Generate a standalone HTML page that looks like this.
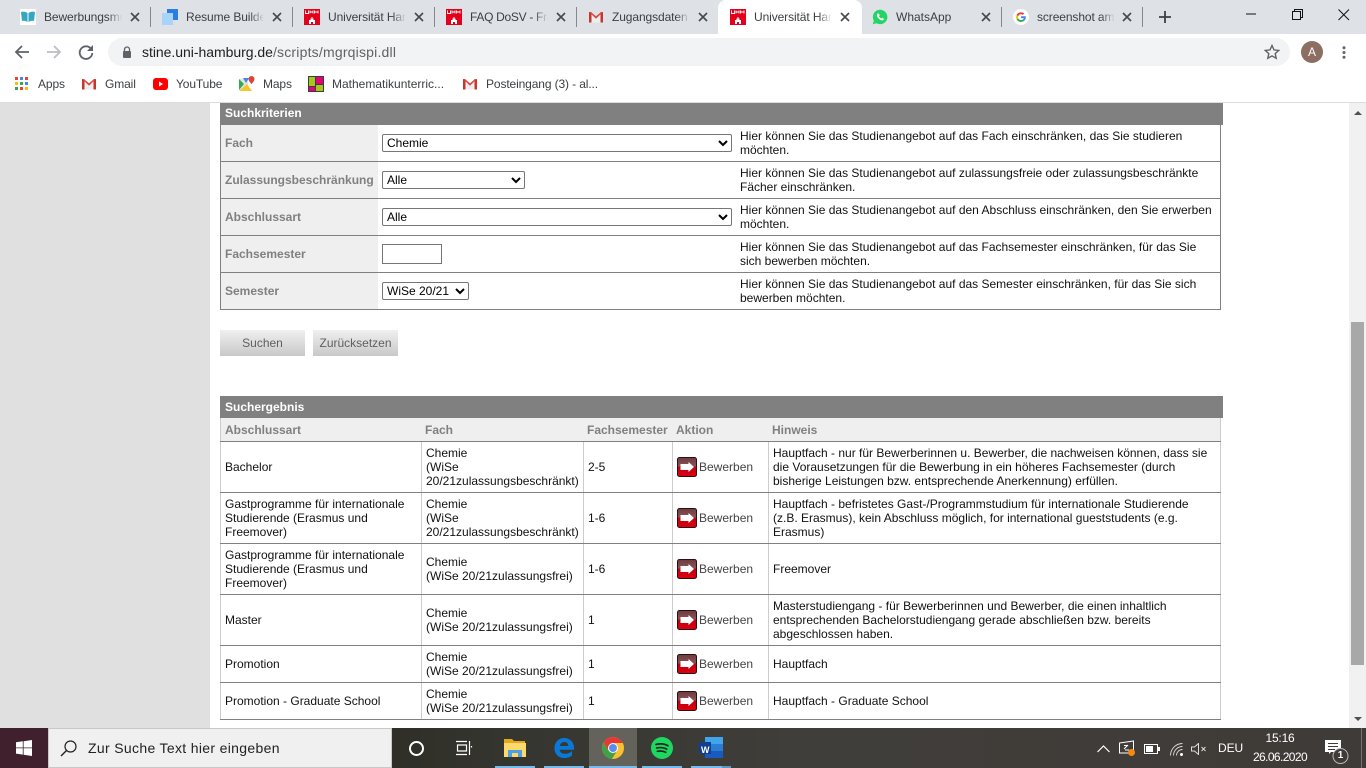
<!DOCTYPE html>
<html lang="de"><head><meta charset="utf-8"><title>Universität Hamburg</title>
<style>
*{box-sizing:border-box}
html,body{margin:0;padding:0;width:1366px;height:768px;overflow:hidden;background:#fff;font-family:"Liberation Sans",sans-serif;font-size:12px;color:#000}
.a{position:absolute}
svg{display:block}
#top{left:0;top:0;width:1366px;height:34px;background:#dee1e6}
.tab{position:absolute;top:0;height:34px;width:142px}
.tab svg.f{position:absolute;left:0;top:9px}
.tab .t{position:absolute;left:24px;top:9px;width:78px;height:16px;overflow:hidden;white-space:nowrap;font-size:12px;line-height:16px;letter-spacing:-.1px;color:#3c4043;-webkit-mask-image:linear-gradient(90deg,#000 82%,transparent);mask-image:linear-gradient(90deg,#000 82%,transparent)}
.tab svg.x{position:absolute;left:110px;top:12px}
.sep{position:absolute;top:7px;width:1px;height:20px;background:#85888c}
#bm .b{position:absolute;top:77px;line-height:14px;font-size:12px;letter-spacing:-.12px;color:#3c4043;white-space:nowrap}
.l{position:absolute;background:#808080}
.v{position:absolute;background:#ccc}
.c{position:absolute;display:flex;align-items:center;line-height:14px;white-space:nowrap;color:#111}
.lab{position:absolute;left:221px;width:157px;height:36px;background:#efefef;color:#808080;font-weight:bold;line-height:36px;padding-left:4px}
.d{position:absolute;left:740px;line-height:14px;white-space:nowrap;color:#111}
select{position:absolute;left:382px;height:18px;font:12px "Liberation Sans",sans-serif;background:#fff;color:#000;border:1px solid #767676;border-radius:2px;padding:0;margin:0}
.hd{position:absolute;left:220px;width:1003px;height:22px;background:#808080;color:#fff;font-weight:bold;line-height:20px;padding-left:5px}
.sh{position:absolute;top:423px;line-height:14px;font-weight:bold;color:#808080}
.btn{position:absolute;top:330px;width:85px;height:26px;background:linear-gradient(#f0f0f0,#c8c8c8);color:#5f5f5f;text-align:center;line-height:27px}
.ar{position:absolute;left:677px;width:20px;height:20px}
.bw{position:absolute;left:699px;line-height:14px;color:#444}
.ul{position:absolute;top:766px;height:2px;background:#76b9ed}
</style></head><body>
<svg width="0" height="0" style="position:absolute">
<symbol id="uhh" viewBox="0 0 16 16"><rect width="16" height="16" fill="#e2001a"/><path d="M1.5 1.5v3h3v-3M6 1.5v3M9 1.5v3M6 3h3M10.500 1.500v3M14 1.500v3M10.500 3H14" fill="none" stroke="#fff" stroke-width=".9"/><path d="M5 15v-4h1.500V9.500h1V8h1v1.500h1V11H11v4H9v-2H7v2z" fill="#fff"/></symbol>
<symbol id="gm" viewBox="0 0 16 16"><path d="M1 3h2.500v10.500H1z" fill="#c5372c"/><path d="M12.500 3H15v10.500h-2.500z" fill="#c5372c"/><path d="M3.500 13.500V6L8 9.500 12.500 6v7.500z" fill="#eee"/><path d="M1 3h1.800L8 7.200 13.200 3H15L8 9.800z" fill="#d94a3d"/></symbol>
</svg>

<div id="top" class="a"></div>
<div class="tab" style="left:20px"><svg class="f" width="16" height="16" viewBox="0 0 16 16"><rect width="16" height="16" fill="#fff"/><path d="M1 3c3-1 5 0 6.500 1v9C6 12 4 11.500 2 12z" fill="#35a7c1"/><path d="M15 3c-3-1-5 0-6.500 1v9c1.500-1 3.500-1.500 5.500-1z" fill="#35a7c1"/></svg><span class="t">Bewerbungsmu</span><svg class="x" width="10" height="10" viewBox="0 0 10 10"><path d="M1 1l8 8M9 1L1 9" stroke="#45484c" stroke-width="1.600"/></svg></div><div class="sep" style="left:150px"></div>
<div class="tab" style="left:162px"><svg class="f" width="16" height="16" viewBox="0 0 16 16"><rect x="0" y="4" width="11" height="12" fill="#a8d3fa"/><path d="M5 0h11v11H11V4H5z" fill="#2a7de1"/></svg><span class="t">Resume Builder</span><svg class="x" width="10" height="10" viewBox="0 0 10 10"><path d="M1 1l8 8M9 1L1 9" stroke="#45484c" stroke-width="1.600"/></svg></div><div class="sep" style="left:292px"></div>
<div class="tab" style="left:304px"><svg class="f" width="16" height="16"><use href="#uhh"/></svg><span class="t">Universität Hamburg</span><svg class="x" width="10" height="10" viewBox="0 0 10 10"><path d="M1 1l8 8M9 1L1 9" stroke="#45484c" stroke-width="1.600"/></svg></div><div class="sep" style="left:434px"></div>
<div class="tab" style="left:446px"><svg class="f" width="16" height="16"><use href="#uhh"/></svg><span class="t" style="left:24px;letter-spacing:-.3px">FAQ DoSV - Frag</span><svg class="x" width="10" height="10" viewBox="0 0 10 10"><path d="M1 1l8 8M9 1L1 9" stroke="#45484c" stroke-width="1.600"/></svg></div><div class="sep" style="left:576px"></div>
<div class="tab" style="left:588px"><svg class="f" width="16" height="16"><use href="#gm"/></svg><span class="t">Zugangsdaten</span><svg class="x" width="10" height="10" viewBox="0 0 10 10"><path d="M1 1l8 8M9 1L1 9" stroke="#45484c" stroke-width="1.600"/></svg></div>
<div class="a" style="left:718px;top:0;width:144px;height:34px;background:#fff;border-radius:8px 8px 0 0"></div>
<div class="tab" style="left:730px"><svg class="f" width="16" height="16"><use href="#uhh"/></svg><span class="t">Universität Hamburg</span><svg class="x" width="10" height="10" viewBox="0 0 10 10"><path d="M1 1l8 8M9 1L1 9" stroke="#45484c" stroke-width="1.600"/></svg></div>
<div class="tab" style="left:872px"><svg class="f" width="16" height="16" viewBox="0 0 16 16"><path d="M8 .8a7.200 7.200 0 0 0-6.200 10.800L.8 15.200l3.700-1A7.200 7.200 0 1 0 8 .8z" fill="#25d366"/><path d="M5.500 4.500c-1 1-.8 2.500.5 4.200s3 2.800 4.400 2.700c1-.1 1.700-1 1.500-1.600l-1.700-1-.8.800c-1-.4-2-1.400-2.400-2.400l.7-.7-.8-1.900z" fill="#fff"/></svg><span class="t" style="-webkit-mask-image:none;mask-image:none;letter-spacing:0">WhatsApp</span><svg class="x" style="left:109px" width="10" height="10" viewBox="0 0 10 10"><path d="M1 1l8 8M9 1L1 9" stroke="#45484c" stroke-width="1.600"/></svg></div><div class="sep" style="left:1001px"></div>
<div class="tab" style="left:1013px"><svg class="f" width="16" height="16" viewBox="0 0 16 16"><circle cx="8" cy="8" r="8" fill="#fff"/><path d="M12.800 8.200c0-.4 0-.7-.1-1H8v1.900h2.700a2.300 2.300 0 0 1-1 1.500l1.500 1.200c1-.9 1.600-2.200 1.600-3.600z" fill="#4285f4"/><path d="M8 13c1.300 0 2.400-.4 3.200-1.200l-1.500-1.200c-.4.300-1 .5-1.700.5a3 3 0 0 1-2.800-2L3.600 10.300A5 5 0 0 0 8 13z" fill="#34a853"/><path d="M5.200 9.100a3 3 0 0 1 0-1.900L3.600 5.900a5 5 0 0 0 0 4.400z" fill="#fbbc05"/><path d="M8 5.200c.7 0 1.400.3 1.900.7l1.400-1.400A5 5 0 0 0 3.600 5.900l1.600 1.300A3 3 0 0 1 8 5.200z" fill="#ea4335"/></svg><span class="t">screenshot am</span><svg class="x" style="left:109px" width="10" height="10" viewBox="0 0 10 10"><path d="M1 1l8 8M9 1L1 9" stroke="#45484c" stroke-width="1.600"/></svg></div><div class="sep" style="left:1142px"></div>
<svg class="a" style="left:1159px;top:11px" width="12" height="12" viewBox="0 0 12 12"><path d="M6 0v12M0 6h12" stroke="#3c4043" stroke-width="1.800"/></svg>
<svg class="a" style="left:1246px;top:8px" width="110" height="14" viewBox="0 0 110 14"><path d="M0 6h10" stroke="#111" stroke-width="1"/><path d="M46.500 3.500h8v8h-8zM48.500 3.500v-2h8v8h-2" fill="none" stroke="#111"/><path d="M92.500 1.500L103 12M103 1.500L92.500 12" stroke="#111"/></svg>

<!-- toolbar -->
<svg class="a" style="left:14px;top:44px" width="16" height="16" viewBox="0 0 16 16"><path d="M15 8H2M8 2L2 8l6 6" fill="none" stroke="#5f6368" stroke-width="1.800"/></svg>
<svg class="a" style="left:46px;top:44px" width="16" height="16" viewBox="0 0 16 16"><path d="M1 8h13M8 2l6 6-6 6" fill="none" stroke="#bcbec1" stroke-width="1.800"/></svg>
<svg class="a" style="left:78px;top:44px" width="16" height="16" viewBox="0 0 16 16"><path d="M13.500 5.500A6.300 6.300 0 1 0 14.300 9" fill="none" stroke="#5f6368" stroke-width="1.800"/><path d="M15 1v6H9z" fill="#5f6368"/></svg>
<div class="a" style="left:108px;top:38px;width:1182px;height:28px;border-radius:14px;background:#f1f3f4"></div>
<svg class="a" style="left:122px;top:46px" width="10" height="12" viewBox="0 0 10 12"><path d="M2.500 5V3.500a2.500 2.500 0 0 1 5 0V5" fill="none" stroke="#5f6368" stroke-width="1.300"/><rect x="1" y="5" width="8" height="7" rx="1" fill="#5f6368"/></svg>
<div class="a" style="left:142px;top:44px;font-size:14px;line-height:17px;color:#202124;white-space:nowrap;letter-spacing:-.03px">stine.uni-hamburg.de<span style="color:#5f6368;letter-spacing:.2px">/scripts/mgrqispi.dll</span></div>
<svg class="a" style="left:1264px;top:44px" width="16" height="16" viewBox="0 0 16 16"><path d="M8 1.500l2 4.400 4.800.5-3.600 3.200 1 4.700L8 11.900 3.800 14.300l1-4.700L1.200 6.400 6 5.900z" fill="none" stroke="#5f6368" stroke-width="1.400"/></svg>
<div class="a" style="left:1301px;top:41px;width:22px;height:22px;border-radius:50%;background:#8d6e63;color:#fff;text-align:center;line-height:22px;font-size:12px">A</div>
<svg class="a" style="left:1342px;top:46px" width="4" height="13"><circle cx="2" cy="1.800" r="1.500" fill="#5f6368"/><circle cx="2" cy="6.500" r="1.500" fill="#5f6368"/><circle cx="2" cy="11.200" r="1.500" fill="#5f6368"/></svg>

<!-- bookmarks -->
<div id="bm">
<svg class="a" style="left:15px;top:77px" width="14" height="14" viewBox="0 0 14 14"><g><rect x="0" y="0" width="3" height="3" fill="#ea4335"/><rect x="5" y="0" width="3" height="3" fill="#4285f4"/><rect x="10" y="0" width="3" height="3" fill="#ea4335"/><rect x="0" y="5" width="3" height="3" fill="#fbbc05"/><rect x="5" y="5" width="3" height="3" fill="#34a853"/><rect x="10" y="5" width="3" height="3" fill="#4285f4"/><rect x="0" y="10" width="3" height="3" fill="#34a853"/><rect x="5" y="10" width="3" height="3" fill="#ea4335"/><rect x="10" y="10" width="3" height="3" fill="#fbbc05"/></g></svg>
<span class="b" style="left:38px">Apps</span>
<svg class="a" style="left:81px;top:76px" width="16" height="16"><use href="#gm"/></svg>
<span class="b" style="left:105px">Gmail</span>
<svg class="a" style="left:153px;top:78px" width="16" height="12" viewBox="0 0 16 12"><rect width="15" height="12" rx="3" fill="#f00"/><path d="M6 3.500v5l4-2.500z" fill="#fff"/></svg>
<span class="b" style="left:176px">YouTube</span>
<svg class="a" style="left:239px;top:76px" width="16" height="16" viewBox="0 0 16 16"><path d="M0 3l9-1v13H1z" fill="#dfe7e0"/><path d="M0 15l8-7 5 7z" fill="#f7c52e"/><path d="M0 3l5 5-5 6z" fill="#34a853"/><path d="M4 2h6L7 7z" fill="#4285f4"/><path d="M12.500 0a3 3 0 0 0-3 3c0 2 3 5 3 5s3-3 3-5a3 3 0 0 0-3-3z" fill="#db4437"/></svg>
<span class="b" style="left:263px">Maps</span>
<svg class="a" style="left:308px;top:76px" width="16" height="16" viewBox="0 0 16 16"><rect width="16" height="16" fill="#3d3d35"/><path d="M1 1h6v9H1z" fill="#a5c81c"/><path d="M8 1h7v7H8z" fill="#e6007e"/><path d="M1 11h6v4H1z" fill="#e6007e"/><path d="M8 9h7v6H8z" fill="#a5c81c"/></svg>
<span class="b" style="left:332px;letter-spacing:0">Mathematikunterric...</span>
<svg class="a" style="left:462px;top:76px" width="16" height="16"><use href="#gm"/></svg>
<span class="b" style="left:486px">Posteingang (3) - al...</span>
</div>
<div class="a" style="left:0;top:102px;width:1366px;height:1px;background:#dcdcdc"></div>

<!-- page bg -->
<div class="a" style="left:0;top:103px;width:210px;height:625px;background:#e0e0e0"></div>
<div class="a" style="left:1349px;top:103px;width:17px;height:625px;background:#f1f1f1"></div>
<div class="a" style="left:1351px;top:322px;width:13px;height:343px;background:#a8a8a8"></div>
<svg class="a" style="left:1354px;top:111px" width="8" height="4"><path d="M0 4L4 0l4 4z" fill="#505050"/></svg>
<svg class="a" style="left:1354px;top:717px" width="8" height="4"><path d="M0 0l4 4 4-4z" fill="#505050"/></svg>

<!-- Suchkriterien -->
<div class="hd" style="top:103px">Suchkriterien</div>
<div class="l" style="left:220px;top:125px;width:1px;height:185px"></div>
<div class="l" style="left:1220px;top:125px;width:1px;height:185px"></div>
<div class="lab" style="top:125px">Fach</div>
<div class="lab" style="top:162px">Zulassungsbeschränkung</div>
<div class="lab" style="top:199px">Abschlussart</div>
<div class="lab" style="top:236px">Fachsemester</div>
<div class="lab" style="top:273px">Semester</div>
<div class="l" style="left:220px;top:161px;width:1001px;height:1px"></div>
<div class="l" style="left:220px;top:198px;width:1001px;height:1px"></div>
<div class="l" style="left:220px;top:235px;width:1001px;height:1px"></div>
<div class="l" style="left:220px;top:272px;width:1001px;height:1px"></div>
<div class="l" style="left:220px;top:309px;width:1001px;height:1px"></div>
<select style="top:134px;width:350px"><option>Chemie</option></select>
<select style="top:171px;width:143px"><option>Alle</option></select>
<select style="top:208px;width:350px"><option>Alle</option></select>
<input class="a" type="text" style="left:382px;top:244px;width:60px;height:20px;border:1px solid #767676;border-radius:0;background:#fff;padding:0;margin:0">
<select style="top:282px;width:87px"><option>WiSe 20/21</option></select>
<div class="d" style="top:129px">Hier können Sie das Studienangebot auf das Fach einschränken, das Sie studieren<br>möchten.</div>
<div class="d" style="top:166px">Hier können Sie das Studienangebot auf zulassungsfreie oder zulassungsbeschränkte<br>Fächer einschränken.</div>
<div class="d" style="top:203px">Hier können Sie das Studienangebot auf den Abschluss einschränken, den Sie erwerben<br>möchten.</div>
<div class="d" style="top:240px">Hier können Sie das Studienangebot auf das Fachsemester einschränken, für das Sie<br>sich bewerben möchten.</div>
<div class="d" style="top:277px">Hier können Sie das Studienangebot auf das Semester einschränken, für das Sie sich<br>bewerben möchten.</div>
<div class="btn" style="left:220px">Suchen</div>
<div class="btn" style="left:313px">Zurücksetzen</div>

<!-- Suchergebnis -->
<div class="hd" style="top:396px;line-height:22px">Suchergebnis</div>
<div class="a" style="left:221px;top:418px;width:1000px;height:23px;background:#efefef"></div>
<span class="sh" style="left:225px">Abschlussart</span>
<span class="sh" style="left:425px">Fach</span>
<span class="sh" style="left:587px">Fachsemester</span>
<span class="sh" style="left:676px">Aktion</span>
<span class="sh" style="left:772px">Hinweis</span>
<div class="v" style="left:220px;top:418px;width:1px;height:302px"></div>
<div class="v" style="left:421px;top:441px;width:1px;height:279px"></div>
<div class="v" style="left:583px;top:441px;width:1px;height:279px"></div>
<div class="v" style="left:672px;top:441px;width:1px;height:279px"></div>
<div class="v" style="left:768px;top:441px;width:1px;height:279px"></div>
<div class="v" style="left:1220px;top:418px;width:1px;height:302px"></div>
<div class="l" style="left:220px;top:441px;width:1001px;height:1px"></div>
<div class="l" style="left:220px;top:492px;width:1001px;height:1px"></div>
<div class="l" style="left:220px;top:543px;width:1001px;height:1px"></div>
<div class="l" style="left:220px;top:594px;width:1001px;height:1px"></div>
<div class="l" style="left:220px;top:645px;width:1001px;height:1px"></div>
<div class="l" style="left:220px;top:682px;width:1001px;height:1px"></div>
<div class="l" style="left:220px;top:719px;width:1001px;height:1px"></div>

<svg width="0" height="0" style="position:absolute"><defs><linearGradient id="rg" x1="0" y1="0" x2="0" y2="1"><stop offset="0" stop-color="#6e3a3e"/><stop offset=".45" stop-color="#8a5458"/><stop offset=".5" stop-color="#c00010"/><stop offset="1" stop-color="#dc0010"/></linearGradient></defs>
<symbol id="go" viewBox="0 0 20 20"><rect x=".5" y=".5" width="19" height="19" rx="2" fill="url(#rg)" stroke="#2a1010"/><path d="M3.500 7h8V5l5.500 5-5.500 5v-2h-8z" fill="#fff"/></symbol></svg>

<div class="c" style="left:225px;top:442px;height:50px">Bachelor</div>
<div class="c" style="left:426px;top:442px;height:50px">Chemie<br>(WiSe<br>20/21zulassungsbeschränkt)</div>
<div class="c" style="left:588px;top:442px;height:50px">2-5</div>
<svg class="ar" style="top:457px"><use href="#go"/></svg><span class="bw" style="top:460px">Bewerben</span>
<div class="c" style="left:773px;top:442px;height:50px">Hauptfach - nur für Bewerberinnen u. Bewerber, die nachweisen können, dass sie<br>die Vorausetzungen für die Bewerbung in ein höheres Fachsemester (durch<br>bisherige Leistungen bzw. entsprechende Anerkennung) erfüllen.</div>

<div class="c" style="left:225px;top:493px;height:50px">Gastprogramme für internationale<br>Studierende (Erasmus und<br>Freemover)</div>
<div class="c" style="left:426px;top:493px;height:50px">Chemie<br>(WiSe<br>20/21zulassungsbeschränkt)</div>
<div class="c" style="left:588px;top:493px;height:50px">1-6</div>
<svg class="ar" style="top:508px"><use href="#go"/></svg><span class="bw" style="top:511px">Bewerben</span>
<div class="c" style="left:773px;top:493px;height:50px">Hauptfach - befristetes Gast-/Programmstudium für internationale Studierende<br>(z.B. Erasmus), kein Abschluss möglich, for international gueststudents (e.g.<br>Erasmus)</div>

<div class="c" style="left:225px;top:544px;height:50px">Gastprogramme für internationale<br>Studierende (Erasmus und<br>Freemover)</div>
<div class="c" style="left:426px;top:544px;height:50px">Chemie<br>(WiSe 20/21zulassungsfrei)</div>
<div class="c" style="left:588px;top:544px;height:50px">1-6</div>
<svg class="ar" style="top:559px"><use href="#go"/></svg><span class="bw" style="top:562px">Bewerben</span>
<div class="c" style="left:773px;top:544px;height:50px">Freemover</div>

<div class="c" style="left:225px;top:595px;height:50px">Master</div>
<div class="c" style="left:426px;top:595px;height:50px">Chemie<br>(WiSe 20/21zulassungsfrei)</div>
<div class="c" style="left:588px;top:595px;height:50px">1</div>
<svg class="ar" style="top:610px"><use href="#go"/></svg><span class="bw" style="top:613px">Bewerben</span>
<div class="c" style="left:773px;top:595px;height:50px">Masterstudiengang - für Bewerberinnen und Bewerber, die einen inhaltlich<br>entsprechenden Bachelorstudiengang gerade abschließen bzw. bereits<br>abgeschlossen haben.</div>

<div class="c" style="left:225px;top:646px;height:36px">Promotion</div>
<div class="c" style="left:426px;top:646px;height:36px">Chemie<br>(WiSe 20/21zulassungsfrei)</div>
<div class="c" style="left:588px;top:646px;height:36px">1</div>
<svg class="ar" style="top:654px"><use href="#go"/></svg><span class="bw" style="top:657px">Bewerben</span>
<div class="c" style="left:773px;top:646px;height:36px">Hauptfach</div>

<div class="c" style="left:225px;top:683px;height:36px">Promotion - Graduate School</div>
<div class="c" style="left:426px;top:683px;height:36px">Chemie<br>(WiSe 20/21zulassungsfrei)</div>
<div class="c" style="left:588px;top:683px;height:36px">1</div>
<svg class="ar" style="top:691px"><use href="#go"/></svg><span class="bw" style="top:694px">Bewerben</span>
<div class="c" style="left:773px;top:683px;height:36px">Hauptfach - Graduate School</div>

<!-- taskbar -->
<div class="a" style="left:0;top:728px;width:1366px;height:40px;background:linear-gradient(90deg,#40202c 0,#40202c 48px,#2f2f28 392px,#35352f 500px,#403e3a 800px,#3f3b38 1366px)"></div>
<svg class="a" style="left:16px;top:740px" width="16" height="16" viewBox="0 0 16 16"><path d="M0 2.300l6.800-1v6.200H0zM7.600 1.200L16 0v7.500H7.600zM0 8.300h6.800v6.300l-6.800-1zM7.600 8.300H16V16l-8.400-1.200z" fill="#fff"/></svg>
<div class="a" style="left:48px;top:728px;width:344px;height:40px;background:#f0f0f0;border:1px solid #c8c8c8"></div>
<svg class="a" style="left:60px;top:740px" width="17" height="17" viewBox="0 0 17 17"><circle cx="10.500" cy="6.500" r="5.500" fill="none" stroke="#222" stroke-width="1.200"/><path d="M6.500 10.500L1 16" stroke="#222" stroke-width="1.400"/></svg>
<div class="a" style="left:88px;top:740px;font-size:14px;line-height:17px;letter-spacing:.33px;color:#222;white-space:nowrap">Zur Suche Text hier eingeben</div>
<div class="a" style="left:409px;top:741px;width:15px;height:15px;border:2px solid #fff;border-radius:50%"></div>
<svg class="a" style="left:455px;top:740px" width="18" height="16" viewBox="0 0 18 16"><path d="M1 1.500h11M1 14.500h11M2.500 5h9v6h-9zM14.500 1v14M16.500 6v1.500" fill="none" stroke="#fff" stroke-width="1.200"/></svg>
<div class="a" style="left:589px;top:728px;width:48px;height:40px;background:#63635b"></div>
<svg class="a" style="left:504px;top:738px" width="22" height="20" viewBox="0 0 22 20"><path d="M0 1h8l2 2h11v3H0z" fill="#e3a81c"/><path d="M0 5h22v14H0z" fill="#fcd96d"/><path d="M4 12h14v7h-4v-4H8v4H4z" fill="#4fa0e0"/></svg>
<svg class="a" style="left:554px;top:737px" width="20" height="22" viewBox="0 0 20 22"><path d="M10 1C4 1 .5 6 .5 11.500S4.500 21 10 21c3.500 0 6-1 8-2.500V14c-2 1.800-4.500 2.800-7 2.800-3 0-5-1.500-5.300-4H20V11C20 5 16 1 10 1zM5.800 9c.5-2.500 2.500-4 4.600-4 2.300 0 3.900 1.500 4 4z" fill="#0a78d7"/></svg>
<svg class="a" style="left:602px;top:737px" width="22" height="22" viewBox="0 0 22 22"><circle cx="11" cy="11" r="11" fill="#fbc02d"/><path d="M11 0a11 11 0 0 0-9.500 5.500L6 13l5-7h10A11 11 0 0 0 11 0z" fill="#e53935"/><path d="M1.500 5.500A11 11 0 0 0 10 22l4.500-7.500L6 13z" fill="#43a047"/><circle cx="11" cy="11" r="5" fill="#fff"/><circle cx="11" cy="11" r="4" fill="#5b8def"/></svg>
<svg class="a" style="left:651px;top:737px" width="22" height="22" viewBox="0 0 22 22"><circle cx="11" cy="11" r="11" fill="#1ed760"/><path d="M5 7.500c4-1 8.500-.7 12 1.200M5.700 11c3.500-.8 7-.5 10 1.100M6.300 14.300c3-.6 5.800-.4 8.400 1" fill="none" stroke="#1c2a20" stroke-width="1.700" stroke-linecap="round"/></svg>
<svg class="a" style="left:699px;top:737px" width="24" height="22" viewBox="0 0 24 22"><rect x="6" y="0" width="18" height="7" fill="#41a5ee"/><rect x="6" y="7" width="18" height="7" fill="#2b7cd3"/><rect x="6" y="14" width="18" height="7" fill="#185abd"/><rect x="0" y="5" width="12" height="12" fill="#103f91"/></svg>
<div class="a" style="left:701px;top:745px;font-size:9px;font-weight:bold;line-height:10px;color:#fff">W</div>
<div class="ul" style="left:495px;width:40px"></div>
<div class="ul" style="left:544px;width:40px"></div>
<div class="ul" style="left:589px;width:48px"></div>
<div class="ul" style="left:642px;width:40px"></div>
<div class="ul" style="left:691px;width:31px"></div>
<div class="ul" style="left:722px;width:9px;background:#5f94bd"></div>
<svg class="a" style="left:1097px;top:745px" width="13" height="8" viewBox="0 0 13 8"><path d="M.5 7l6-6 6 6" fill="none" stroke="#fff" stroke-width="1.200"/></svg>
<svg class="a" style="left:1119px;top:740px" width="20" height="17" viewBox="0 0 20 17"><path d="M.5 3l14-2v12H.500z" fill="none" stroke="#fff"/><path d="M5 9l4-4M5 5.500h4M6 10h4" stroke="#fff"/><circle cx="12.500" cy="12.500" r="3.500" fill="#f7890c"/></svg>
<svg class="a" style="left:1144px;top:744px" width="16" height="10" viewBox="0 0 16 10"><rect x=".5" y=".5" width="13" height="9" fill="none" stroke="#fff"/><rect x="2" y="2" width="7" height="6" fill="#fff"/><rect x="14" y="3" width="2" height="4" fill="#fff"/></svg>
<svg class="a" style="left:1170px;top:743px" width="14" height="13" viewBox="0 0 14 13"><path d="M.5 12.500A12 12 0 0 1 12.500.5M3.500 12.500a9 9 0 0 1 9-9M6.500 12.500a6 6 0 0 1 6-6" fill="none" stroke="#ddd" stroke-width=".9"/><circle cx="11.500" cy="11.500" r="1.500" fill="#fff"/></svg>
<svg class="a" style="left:1191px;top:743px" width="16" height="12" viewBox="0 0 16 12"><path d="M.5 4h3l4-3.500v11l-4-3.500h-3z" fill="none" stroke="#ddd"/><path d="M10.500 4l4 4M14.500 4l-4 4" stroke="#ddd"/></svg>
<div class="a" style="left:1218px;top:741px;font-size:12px;line-height:14px;letter-spacing:-.1px;color:#fff">DEU</div>
<div class="a" style="left:1250px;top:731px;width:60px;text-align:center;font-size:12px;line-height:15px;letter-spacing:-.2px;color:#fff;white-space:nowrap">15:16</div>
<div class="a" style="left:1250px;top:750px;width:60px;text-align:center;font-size:12px;line-height:15px;letter-spacing:-.6px;color:#fff;white-space:nowrap">26.06.2020</div>
<svg class="a" style="left:1325px;top:740px" width="25" height="25" viewBox="0 0 25 25"><path d="M0 0h16v12H6l-2 2v-2H0z" fill="#fff"/><path d="M3 3.500h10M3 6.500h10M3 9.500h7" stroke="#3f3b38"/><circle cx="15.500" cy="16" r="7.500" fill="#3f3b38" stroke="#bbb"/></svg>
<div class="a" style="left:1336px;top:750px;width:9px;text-align:center;font-size:10px;font-weight:bold;line-height:12px;color:#fff">1</div>
<div class="a" style="left:1361px;top:728px;width:1px;height:40px;background:#77736f"></div>
</body></html>
